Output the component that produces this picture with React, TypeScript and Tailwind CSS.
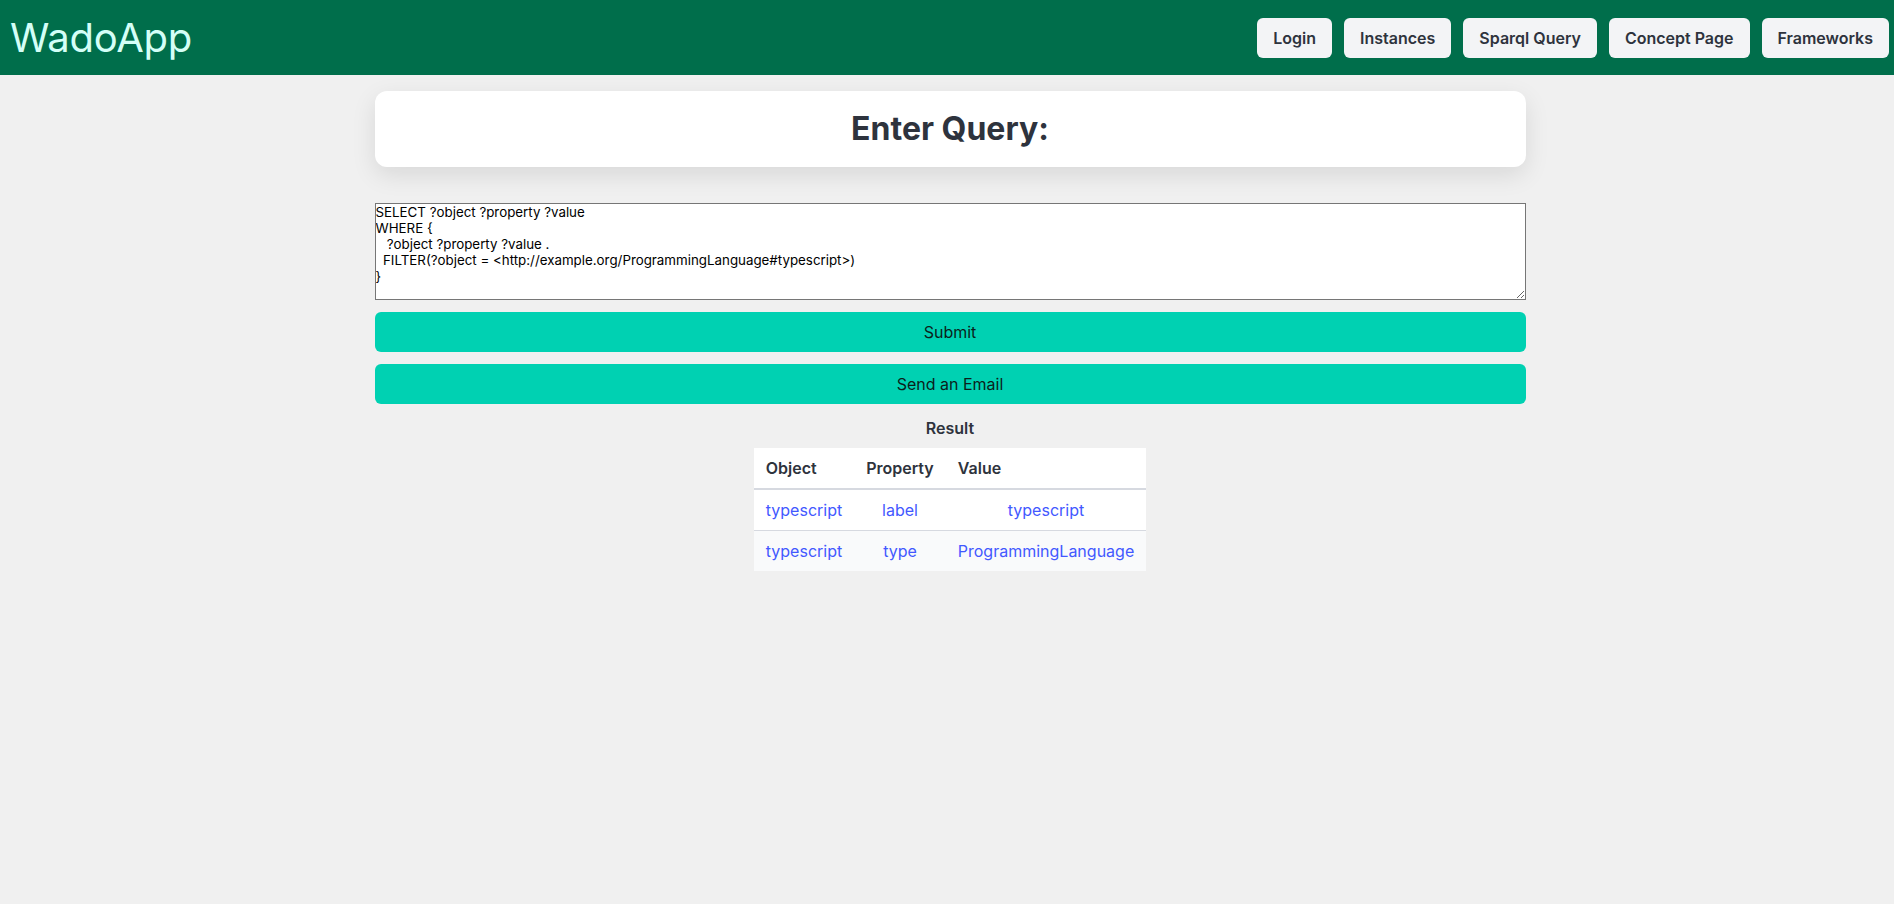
import { useState } from "react";

const navLinks = ["Login", "Instances", "Sparql Query", "Concept Page", "Frameworks"];

const defaultQuery = `SELECT ?object ?property ?value
WHERE {
   ?object ?property ?value .
  FILTER(?object = <http://example.org/ProgrammingLanguage#typescript>)
}`;

const rows = [
  { object: "typescript", property: "label", value: "typescript" },
  { object: "typescript", property: "type", value: "ProgrammingLanguage" },
];

function Navbar() {
  return (
    <nav className="h-[75px] bg-[#006e4b] flex items-center justify-between pl-[10px] pr-[5px]">
      <a href="#" className="text-[40px] leading-none text-[#d4fff7] font-normal tracking-[-0.2px]">
        WadoApp
      </a>
      <div className="flex items-center gap-3">
        {navLinks.map((label) => (
          <button
            key={label}
            className="h-10 px-4 rounded-md bg-[#f3f4f6] text-[#2e333d] text-base font-semibold"
          >
            {label}
          </button>
        ))}
      </div>
    </nav>
  );
}

export default function App() {
  const [query, setQuery] = useState(defaultQuery);

  return (
    <div className="min-h-screen bg-[#f0f0f0] font-['Inter',sans-serif] text-[#4a4f5a]">
      <Navbar />
      <main className="flex justify-center pl-[6px]">
        <div className="w-[1151px] pt-4">
          <div className="bg-white rounded-xl shadow-[0_8px_24px_rgba(0,0,0,0.1)] px-5 py-5 text-center">
            <h1 className="text-[32px] leading-9 font-bold text-[#2e333d]">Enter Query:</h1>
          </div>

          <textarea
            value={query}
            onChange={(e) => setQuery(e.target.value)}
            className="mt-[36px] block w-full h-[97px] bg-white border border-[#767676] text-[13.333px] leading-[16px] text-black font-['Inter',sans-serif]"
          />

          <div className="mt-3 flex flex-col gap-3">
            <button className="h-10 w-full rounded-md bg-[#00d1b2] text-base text-[#0b1f1b]">
              Submit
            </button>
            <button className="h-10 w-full rounded-md bg-[#00d1b2] text-base text-[#0b1f1b]">
              Send an Email
            </button>
          </div>

          <div className="mt-3 flex flex-col items-center">
            <p className="text-base leading-6 font-semibold text-[#2e333d]">Result</p>
            <table className="mt-2 bg-white border-collapse text-base leading-6">
              <thead>
                <tr>
                  <th className="px-3 py-2 text-left font-semibold text-[#2e333d] border-b-2 border-[#d6d9e0]">Object</th>
                  <th className="px-3 py-2 text-left font-semibold text-[#2e333d] border-b-2 border-[#d6d9e0]">Property</th>
                  <th className="px-3 py-2 text-left font-semibold text-[#2e333d] border-b-2 border-[#d6d9e0]">Value</th>
                </tr>
              </thead>
              <tbody>
                {rows.map((row, i) => (
                  <tr key={i} className={i % 2 === 1 ? "bg-[#f9fafb]" : ""}>
                    <td className={"px-3 py-2 text-center " + (i < rows.length - 1 ? "border-b border-[#d6d9e0]" : "")}>
                      <a href="#" className="text-[#4258ff]">{row.object}</a>
                    </td>
                    <td className={"px-3 py-2 text-center " + (i < rows.length - 1 ? "border-b border-[#d6d9e0]" : "")}>
                      <a href="#" className="text-[#4258ff]">{row.property}</a>
                    </td>
                    <td className={"px-3 py-2 text-center " + (i < rows.length - 1 ? "border-b border-[#d6d9e0]" : "")}>
                      <a href="#" className="text-[#4258ff]">{row.value}</a>
                    </td>
                  </tr>
                ))}
              </tbody>
            </table>
          </div>
        </div>
      </main>
    </div>
  );
}
